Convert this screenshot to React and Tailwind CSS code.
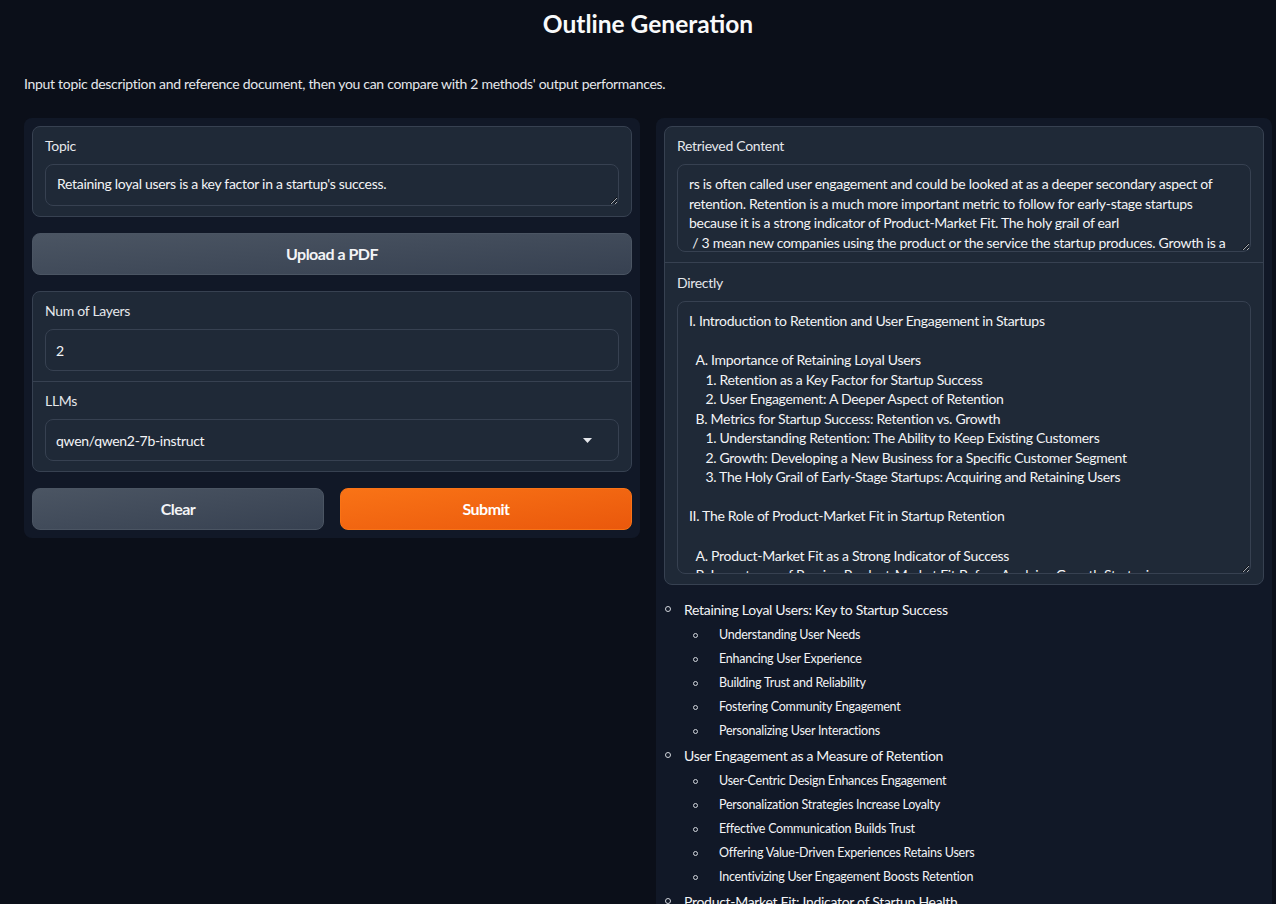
import React from "react";

const retrieved = `rs is often called user engagement and could be looked at as a deeper secondary aspect of retention. Retention is a much more important metric to follow for early-stage startups because it is a strong indicator of Product-Market Fit. The holy grail of earl
 / 3 mean new companies using the product or the service the startup produces. Growth is a process of developing a new business for a specific customer segment.`;

const directly = `I. Introduction to Retention and User Engagement in Startups

  A. Importance of Retaining Loyal Users
     1. Retention as a Key Factor for Startup Success
     2. User Engagement: A Deeper Aspect of Retention
  B. Metrics for Startup Success: Retention vs. Growth
     1. Understanding Retention: The Ability to Keep Existing Customers
     2. Growth: Developing a New Business for a Specific Customer Segment
     3. The Holy Grail of Early-Stage Startups: Acquiring and Retaining Users

II. The Role of Product-Market Fit in Startup Retention

  A. Product-Market Fit as a Strong Indicator of Success
  B. Importance of Proving Product-Market Fit Before Applying Growth Strategies`;

const outline = [
  {
    title: "Retaining Loyal Users: Key to Startup Success",
    items: [
      "Understanding User Needs",
      "Enhancing User Experience",
      "Building Trust and Reliability",
      "Fostering Community Engagement",
      "Personalizing User Interactions",
    ],
  },
  {
    title: "User Engagement as a Measure of Retention",
    items: [
      "User-Centric Design Enhances Engagement",
      "Personalization Strategies Increase Loyalty",
      "Effective Communication Builds Trust",
      "Offering Value-Driven Experiences Retains Users",
      "Incentivizing User Engagement Boosts Retention",
    ],
  },
  {
    title: "Product-Market Fit: Indicator of Startup Health",
    items: ["Defining Product-Market Fit", "Measuring Early Traction"],
  },
];

const Label = ({ children }) => (
  <div className="h-[18px] leading-[18px] text-[14px] tracking-[-0.3px] text-[#e5e7eb] mb-[9px]">{children}</div>
);

const Area = ({ value, h }) => (
  <textarea
    readOnly
    value={value}
    className={`block w-full ${h} resize-y overflow-hidden [color-scheme:dark] rounded-lg border border-[#374151] bg-[#1f2937] px-[11px] pt-[9px] pb-[10px] text-[14px] tracking-[-0.3px] leading-[19.55px] text-[#f3f4f6] outline-none`}
  />
);

function Bullet({ small }) {
  return (
    <span
      className={`shrink-0 rounded-full border border-[#d1d5db] ${small ? "w-[5px] h-[5px]" : "w-[6px] h-[6px]"}`}
    />
  );
}

export default function App() {
  return (
    <div className="min-h-screen bg-[#0b0f19] text-[#f3f4f6] font-['Lato','Liberation_Sans',sans-serif]">
      <div className="pl-6 pr-1">
        <h1 className="pt-[8px] h-[32px] leading-[32px] text-center text-[24.5px] font-bold text-[#f9fafb]">
          Outline Generation
        </h1>
        <p className="mt-[42px] h-[20px] leading-[20px] text-[14px] tracking-[-0.3px] text-[#e5e7eb]">
          Input topic description and reference document, then you can compare with 2 methods' output performances.
        </p>

        <div className="mt-[24px] flex gap-4 items-start">
          {/* left column */}
          <div className="w-[616px] shrink-0 rounded-lg bg-[#111827] p-2 flex flex-col gap-4">
            <div className="rounded-lg border border-[#374151] bg-[#1f2937] px-3 py-[10px]">
              <Label>Topic</Label>
              <Area value="Retaining loyal users is a key factor in a startup's success." h="h-[42px]" />
            </div>

            <button className="h-[42px] rounded-lg border border-[#4b5563] bg-gradient-to-br from-[#4b5563] to-[#374151] text-[16px] tracking-[-0.5px] font-bold text-[#f3f4f6]">
              Upload a PDF
            </button>

            <div className="rounded-lg border border-[#374151] bg-[#1f2937]">
              <div className="px-3 py-[10px] border-b border-[#374151]">
                <Label>Num of Layers</Label>
                <div className="h-[42px] rounded-lg border border-[#374151] bg-[#1f2937] px-[10px] flex items-center text-[14px]">
                  2
                </div>
              </div>
              <div className="px-3 py-[10px]">
                <Label>LLMs</Label>
                <div className="h-[42px] rounded-lg border border-[#374151] bg-[#1f2937] pl-[10px] pr-[26px] flex items-center justify-between text-[14px] tracking-[-0.3px]">
                  <span>qwen/qwen2-7b-instruct</span>
                  <svg width="9" height="5" viewBox="0 0 9 5">
                    <path d="M0 0h9L4.5 5z" fill="#e5e7eb" />
                  </svg>
                </div>
              </div>
            </div>

            <div className="flex gap-4">
              <button className="flex-1 h-[42px] rounded-lg border border-[#4b5563] bg-gradient-to-br from-[#4b5563] to-[#374151] text-[16px] tracking-[-0.5px] font-bold text-[#f3f4f6]">
                Clear
              </button>
              <button className="flex-1 h-[42px] rounded-lg border border-[#f97316] bg-gradient-to-br from-[#f97316] to-[#ea580c] text-[16px] tracking-[-0.5px] font-bold text-white">
                Submit
              </button>
            </div>
          </div>

          {/* right column */}
          <div className="w-[616px] shrink-0 min-h-[786px] rounded-t-lg bg-[#111827] p-2">
            <div className="rounded-lg border border-[#374151] bg-[#1f2937]">
              <div className="px-3 py-[10px] border-b border-[#374151]">
                <Label>Retrieved Content</Label>
                <Area value={retrieved} h="h-[88px]" />
              </div>
              <div className="px-3 pt-[11px] pb-[10px]">
                <Label>Directly</Label>
                <Area value={directly} h="h-[273px]" />
              </div>
            </div>

            <ul className="mt-[14px]">
              {outline.map((sec) => (
                <li key={sec.title} className="mt-[2px] first:mt-0">
                  <div className="flex items-center h-[20px] pl-[1px]">
                    <Bullet />
                    <span className="ml-[13px] text-[14px] tracking-[-0.3px] text-[#f3f4f6]">{sec.title}</span>
                  </div>
                  <ul className="mt-[4px]">
                    {sec.items.map((it) => (
                      <li key={it} className="flex items-center h-[24px] pl-[29px]">
                        <Bullet small />
                        <span className="ml-[21px] text-[12.5px] tracking-[-0.25px] text-[#f3f4f6]">{it}</span>
                      </li>
                    ))}
                  </ul>
                </li>
              ))}
            </ul>
          </div>
        </div>
      </div>
    </div>
  );
}
